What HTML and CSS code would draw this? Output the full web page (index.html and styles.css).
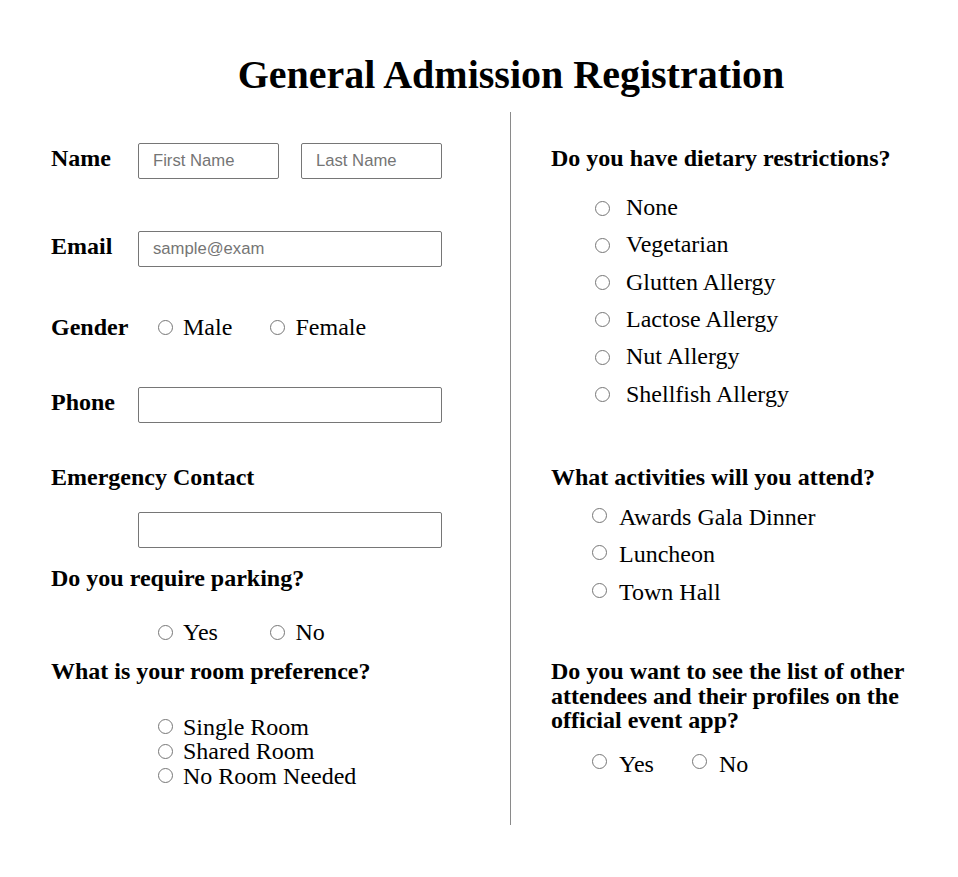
FILE: index.html
```html
<!DOCTYPE html>
<html lang="en">
<head>
<meta charset="utf-8">
<title>General Admission Registration</title>
<link rel="stylesheet" href="styles.css">
</head>
<body>
<h1 class="title">General Admission Registration</h1>
<form class="form">
  <div class="col col-left">
    <div class="row row-name">
      <span class="label">Name</span>
      <input class="input input-half" type="text" placeholder="First Name">
      <input class="input input-half input-last" type="text" placeholder="Last Name">
    </div>
    <div class="row row-email">
      <span class="label">Email</span>
      <input class="input input-full" type="text" placeholder="sample@exam">
    </div>
    <div class="row row-gender">
      <span class="label">Gender</span>
      <div class="choices choices-gender">
        <label class="choice"><input class="radio" type="radio" name="gender"><span>Male</span></label>
        <label class="choice"><input class="radio" type="radio" name="gender"><span>Female</span></label>
      </div>
    </div>
    <div class="row row-phone">
      <span class="label">Phone</span>
      <input class="input input-full" type="text">
    </div>
    <div class="q q-emergency">Emergency Contact</div>
    <div class="row row-emergency">
      <input class="input input-full" type="text">
    </div>
    <div class="q q-parking">Do you require parking?</div>
    <div class="choices choices-parking">
      <label class="choice"><input class="radio" type="radio" name="parking"><span>Yes</span></label>
      <label class="choice"><input class="radio" type="radio" name="parking"><span>No</span></label>
    </div>
    <div class="q q-room">What is your room preference?</div>
    <div class="room-list">
      <label class="room-opt"><input class="radio" type="radio" name="room"><span>Single Room</span></label>
      <label class="room-opt"><input class="radio" type="radio" name="room"><span>Shared Room</span></label>
      <label class="room-opt"><input class="radio" type="radio" name="room"><span>No Room Needed</span></label>
    </div>
  </div>
  <div class="col col-right">
    <div class="q q-diet">Do you have dietary restrictions?</div>
    <div class="diet-list">
      <label class="diet-opt"><input class="radio" type="radio" name="diet"><span>None</span></label>
      <label class="diet-opt"><input class="radio" type="radio" name="diet"><span>Vegetarian</span></label>
      <label class="diet-opt"><input class="radio" type="radio" name="diet"><span>Glutten Allergy</span></label>
      <label class="diet-opt"><input class="radio" type="radio" name="diet"><span>Lactose Allergy</span></label>
      <label class="diet-opt"><input class="radio" type="radio" name="diet"><span>Nut Allergy</span></label>
      <label class="diet-opt"><input class="radio" type="radio" name="diet"><span>Shellfish Allergy</span></label>
    </div>
    <div class="q q-activities">What activities will you attend?</div>
    <div class="act-list">
      <label class="act-opt"><input class="radio" type="radio" name="act1"><span>Awards Gala Dinner</span></label>
      <label class="act-opt"><input class="radio" type="radio" name="act2"><span>Luncheon</span></label>
      <label class="act-opt"><input class="radio" type="radio" name="act3"><span>Town Hall</span></label>
    </div>
    <div class="q q-app">Do you want to see the list of other attendees and their profiles on the official event app?</div>
    <div class="app-choices">
      <label class="act-opt app-opt"><input class="radio" type="radio" name="app"><span>Yes</span></label>
      <label class="act-opt app-opt"><input class="radio" type="radio" name="app"><span>No</span></label>
    </div>
  </div>
</form>
</body>
</html>
```
FILE: styles.css
```css
* {
  box-sizing: border-box;
}

body {
  margin: 0;
  background: #fff;
  color: #000;
  font-family: "Liberation Serif", "Times New Roman", serif;
  font-size: 24px;
}

.title {
  margin: 52px 0 14px;
  padding-left: 64px;
  text-align: center;
  font-size: 40px;
  line-height: 46px;
  font-weight: bold;
}

.form {
  display: flex;
  align-items: stretch;
}

.col-left {
  width: 510px;
  flex: none;
  padding: 0 0 36.5px 51px;
}

.col-right {
  width: 448px;
  flex: none;
  border-left: 1px solid #8a8a8a;
  padding-left: 40px;
}

.row {
  display: flex;
  align-items: flex-start;
}

.label {
  width: 87px;
  flex: none;
  margin-top: 1px;
  font-weight: bold;
  line-height: 28px;
}

.q {
  font-weight: bold;
  line-height: 28px;
}

.input {
  height: 36px;
  margin: 0;
  border: 1px solid #767676;
  border-radius: 2px;
  padding: 0 14px;
  background: #fff;
  color: #000;
  font-family: "Liberation Sans", Arial, sans-serif;
  font-size: 16.67px;
}

.input::placeholder {
  color: #757575;
}

.input-half {
  width: 141px;
}

.input-last {
  margin-left: 22px;
}

.input-full {
  width: 304px;
}

.radio {
  width: 15px;
  height: 15px;
  margin: 0;
  flex: none;
}

.choices {
  display: flex;
  height: 28px;
}

.choice {
  display: flex;
  align-items: center;
  width: 112.5px;
  line-height: 28px;
}

.choice .radio {
  margin-right: 10.5px;
}

.row-name {
  margin-top: 31px;
}

.row-email {
  margin-top: 52px;
}

.row-gender {
  margin-top: 45px;
}

.choices-gender {
  margin-left: 19.5px;
  margin-top: 1px;
}

.row-phone {
  margin-top: 46px;
}

.q-emergency {
  margin-top: 40px;
}

.row-emergency {
  margin-top: 21px;
  padding-left: 87px;
}

.q-parking {
  margin-top: 16px;
}

.choices-parking {
  margin-top: 26px;
  padding-left: 106.5px;
}

.q-room {
  margin-top: 11px;
}

.room-list {
  margin-top: 29.5px;
  padding-left: 106.5px;
  display: flex;
  flex-direction: column;
}

.room-opt {
  display: flex;
  align-items: flex-start;
  line-height: 24.7px;
}

.room-opt .radio {
  margin-top: 4.5px;
  margin-right: 10.5px;
}

.q-diet {
  margin-top: 32px;
}

.diet-list {
  margin-top: 21px;
  padding-left: 44px;
  display: flex;
  flex-direction: column;
  gap: 9.33px;
}

.diet-opt {
  display: flex;
  align-items: flex-start;
  line-height: 28px;
}

.diet-opt .radio {
  margin-top: 7.5px;
  margin-right: 16px;
}

.q-activities {
  margin-top: 55.4px;
}

.act-list {
  margin-top: 11.9px;
  padding-left: 41.3px;
  display: flex;
  flex-direction: column;
  gap: 9.5px;
}

.act-opt {
  display: flex;
  align-items: flex-start;
  line-height: 28px;
}

.act-opt .radio {
  margin-top: 4.9px;
  margin-right: 11.7px;
}

.q-app {
  margin-top: 53.1px;
  line-height: 24.5px;
}

.app-choices {
  margin-top: 17.1px;
  padding-left: 41.3px;
  display: flex;
}

.app-opt {
  width: 100px;
}

.app-opt .radio {
  margin-top: 4.2px;
}
```
